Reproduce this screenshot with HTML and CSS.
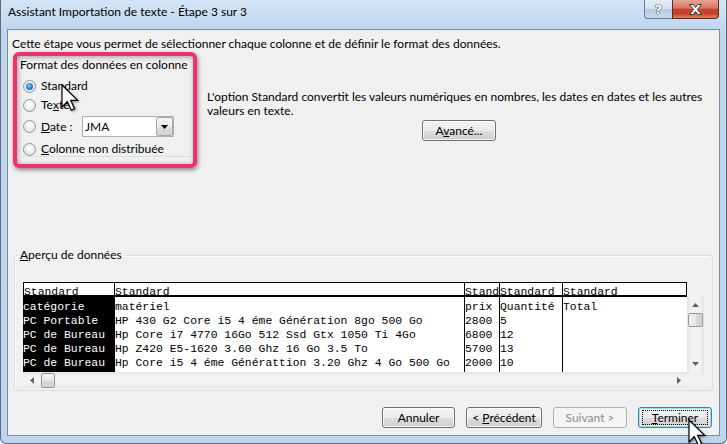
FILE: index.html
```html
<!DOCTYPE html>
<html lang="fr">
<head>
<meta charset="utf-8">
<title>Assistant Importation de texte</title>
<link rel="stylesheet" href="styles.css">
</head>
<body>
<div class="window">
  <div class="titlebar">
    <div class="title">Assistant Importation de texte - Étape 3 sur 3</div>
    <div class="caption">
      <div class="cap-btn help">?</div>
      <div class="cap-btn close">
        <svg width="13" height="11" viewBox="0 0 13 11"><path d="M0.5 0.5h3.6l2.4 3 2.4-3h3.6l-4.2 5 4.2 5h-3.6l-2.4-3-2.4 3h-3.6l4.2-5z" fill="#fff" stroke="#3d3d3d" stroke-width="1"/></svg>
      </div>
    </div>
  </div>
  <div class="client">
    <p class="intro">Cette étape vous permet de sélectionner chaque colonne et de définir le format des données.</p>
    <div class="top">
      <div class="highlight">
        <fieldset class="group format">
          <legend>Format des données en colonne</legend>
          <div class="opt r1"><span class="radio checked"></span><span>Standard</span></div>
          <div class="opt r2"><span class="radio"></span><span>Te<u>x</u>te</span></div>
          <div class="opt r3"><span class="radio"></span><span class="date-label"><u>D</u>ate :</span>
            <div class="combo"><span class="combo-text">JMA</span><span class="combo-btn"><svg width="7" height="4" viewBox="0 0 7 4"><path d="M0 0h7L3.5 4z" fill="#000"/></svg></span></div>
          </div>
          <div class="opt r4"><span class="radio"></span><span><u>C</u>olonne non distribuée</span></div>
        </fieldset>
      </div>
      <div class="explain">
        <p>L'option Standard convertit les valeurs numériques en nombres, les dates en dates et les autres<br>valeurs en texte.</p>
        <div class="center"><button class="btn adv"><span>A<u>v</u>ancé...</span></button></div>
      </div>
    </div>
    <fieldset class="group preview">
      <legend><u>A</u>perçu de données</legend>
      <div class="grid">
        <div class="cols">
          <div class="col c1">
            <div class="th first">Standard</div>
            <div class="body sel">
              <div class="td">catégorie</div>
              <div class="td">PC Portable</div>
              <div class="td">PC de Bureau</div>
              <div class="td">PC de Bureau</div>
              <div class="td">PC de Bureau</div>
            </div>
          </div>
          <div class="col c2">
            <div class="th">Standard</div>
            <div class="body">
              <div class="td">matériel</div>
              <div class="td">HP 430 G2 Core i5 4 éme Génération 8go 500 Go</div>
              <div class="td">Hp Core i7 4770 16Go 512 Ssd Gtx 1050 Ti 4Go</div>
              <div class="td">Hp Z420 E5-1620 3.60 Ghz 16 Go 3.5 To</div>
              <div class="td">Hp Core i5 4 éme Générattion 3.20 Ghz 4 Go 500 Go</div>
            </div>
          </div>
          <div class="col c3">
            <div class="th">Stand</div>
            <div class="body">
              <div class="td">prix</div>
              <div class="td">2800</div>
              <div class="td">6800</div>
              <div class="td">5700</div>
              <div class="td">2000</div>
            </div>
          </div>
          <div class="col c4">
            <div class="th">Standard</div>
            <div class="body">
              <div class="td">Quantité</div>
              <div class="td">5</div>
              <div class="td">12</div>
              <div class="td">13</div>
              <div class="td">10</div>
            </div>
          </div>
          <div class="col c5 last">
            <div class="th">Standard</div>
            <div class="body">
              <div class="td">Total</div>
            </div>
          </div>
        </div>
        <div class="vscroll">
          <span class="arrow"><svg width="7" height="4" viewBox="0 0 7 4"><path d="M3.5 0L7 4H0z" fill="#606060"/></svg></span>
          <span class="thumb v"></span>
          <span class="track"></span>
          <span class="arrow"><svg width="7" height="4" viewBox="0 0 7 4"><path d="M0 0h7L3.5 4z" fill="#606060"/></svg></span>
        </div>
        <div class="hscroll">
          <span class="arrow"><svg width="4" height="7" viewBox="0 0 4 7"><path d="M0 3.5L4 0v7z" fill="#606060"/></svg></span>
          <span class="thumb h"></span>
          <span class="track"></span>
          <span class="arrow"><svg width="4" height="7" viewBox="0 0 4 7"><path d="M4 3.5L0 0v7z" fill="#606060"/></svg></span>
        </div>
        <div class="corner"></div>
      </div>
    </fieldset>
    <div class="actions">
      <button class="btn w-annuler"><span>Annuler</span></button>
      <button class="btn w-prec"><span>&lt; <u>P</u>récédent</span></button>
      <button class="btn w-suiv disabled"><span>Suivant &gt;</span></button>
      <button class="btn w-term default"><span class="focus"><span><u>T</u>erminer</span></span></button>
    </div>
  </div>
  <svg class="cursor cur1" width="19" height="28" viewBox="0 0 19 28"><path d="M1 1L1 23L6.3 17.6L10.3 26.2L13.6 24.7L9.7 16.4L16.6 16.4Z" fill="#fff" stroke="#000" stroke-width="1.2" stroke-linejoin="miter"/></svg>
  <svg class="cursor cur2" width="19" height="28" viewBox="0 0 19 28"><path d="M1 1L1 23L6.3 17.6L10.3 26.2L13.6 24.7L9.7 16.4L16.6 16.4Z" fill="#fff" stroke="#000" stroke-width="1.2" stroke-linejoin="miter"/></svg>
</div>
</body>
</html>
```
FILE: styles.css
```css
* { box-sizing: border-box; }
html, body { margin: 0; padding: 0; width: 727px; height: 444px; overflow: hidden; }
body { font-family: Lato, "Liberation Sans", Arial, sans-serif; font-size: 12px; color: #000; }

.window {
  position: relative;
  width: 727px; height: 444px;
  display: flex; flex-direction: column;
  background: linear-gradient(to bottom, #d4e4f6 0px, #c1d7f0 28px, #bed5ef 100%);
  border: 1px solid #5b6b7d; border-top: 0;
  border-radius: 0 0 6px 6px;
}

.titlebar { height: 29px; display: flex; align-items: flex-start; flex: none; }
.title { padding: 4px 0 0 7px; line-height: 16px; white-space: nowrap; }
.caption { margin-left: auto; margin-right: 7px; display: flex; }
.cap-btn { height: 19px; display: flex; align-items: center; justify-content: center; }
.help {
  width: 28px;
  border: 1px solid #6a7c91; border-top: 0; border-right: 0;
  border-radius: 0 0 0 4px;
  background: linear-gradient(#e5edf6 0%, #d3e0ee 48%, #bccbdd 52%, #c9d8ea 100%);
  font-family: "DejaVu Sans", sans-serif; font-weight: bold; font-size: 13px; color: #fff;
  text-shadow: 0 0 1px #2e4560, 0 0 1px #2e4560, 0 0 1px #2e4560;
}
.close {
  width: 47px;
  border: 1px solid #5a2d28; border-top: 0;
  border-radius: 0 0 4px 0;
  background: linear-gradient(#e6a596 0%, #d87560 45%, #c6442d 52%, #c34129 75%, #e07e5f 100%);
}

.client {
  flex: 1;
  margin: 0 6px 7px 6px;
  border: 1px solid #7f8c9b;
  background: #f0f0f0;
  display: flex; flex-direction: column;
}
.intro { margin: 0; padding: 6px 0 0 4px; line-height: 16px; white-space: nowrap; }

.top { display: flex; padding-left: 5px; }
.highlight {
  width: 184px; height: 116px; flex: none;
  border: 4px solid #ef2f6e; border-radius: 6px;
  box-shadow: 1px 2px 4px rgba(0,0,0,.45), inset 1px 1px 5px rgba(0,0,0,.35);
}
.group { border: 1px solid #d5dfe5; margin: 0; min-width: 0; }
.group legend { padding: 0 2px; margin-left: -5px; line-height: 16px; white-space: nowrap; }
.format {
  margin-top: 1px; width: 176px; height: 100px;
  border-left: 0; border-radius: 0 3px 3px 0;
  padding: 5px 0 0 6px;
}
.opt { display: flex; align-items: center; gap: 5px; height: 16px; line-height: 16px; white-space: nowrap; }
.opt.r2, .opt.r3 { margin-top: 3px; }
.opt.r3 { height: 21px; }
.opt.r4 { margin-top: 5px; height: 14px; }
.radio {
  width: 13px; height: 13px; flex: none; border-radius: 50%;
  border: 1px solid #8a96a3;
  background: radial-gradient(circle at 50% 40%, #ffffff 0, #f0f0f0 45%, #d2d6da 100%);
  display: flex; align-items: center; justify-content: center;
}
.radio.checked::after {
  content: ""; width: 7px; height: 7px; border-radius: 50%;
  background: radial-gradient(circle at 45% 40%, #9ed2ff 0, #3f8ad6 40%, #15458f 100%);
}
.date-label { width: 36px; }
.combo {
  width: 92px; height: 21px; display: flex; align-items: center;
  background: #fff; border: 1px solid #abadb3;
}
.combo-text { padding-left: 2px; }
.combo-btn {
  margin-left: auto; width: 17px; height: 19px;
  border: 1px solid #a8a8a8; border-radius: 2px;
  background: linear-gradient(#f3f3f3 0%, #ebebeb 50%, #dddddd 51%, #d2d2d2 100%);
  display: flex; align-items: center; justify-content: center;
}

.explain { flex: 1; margin-left: 10px; padding: 38px 8px 0 0; }
.explain p { margin: 0; line-height: 14px; white-space: nowrap; }
.center { text-align: center; margin-top: 2px; }

.btn {
  height: 21px; padding: 0;
  font: inherit; color: #000;
  border: 1px solid #707070; border-radius: 3px;
  background: linear-gradient(#f2f2f2 0%, #ebebeb 50%, #dddddd 51%, #cfcfcf 100%);
  box-shadow: inset 0 0 0 1px rgba(255,255,255,.75);
  display: inline-flex; align-items: center; justify-content: center;
  white-space: nowrap;
}
.adv { width: 74px; }

.preview {
  margin: 79px 6px 0 6px;
  padding: 19px 8px 2px 8px;
  border-radius: 3px;
  box-shadow: inset 1px 1px 0 #fff;
}
.grid {
  display: grid;
  grid-template-columns: 664px 17px;
  grid-template-rows: 15px 75px 16px;
  font-family: "Liberation Mono", "Courier New", monospace; font-size: 11.4px;
}
.cols { grid-column: 1; grid-row: 1 / 3; display: flex; background: #fff; }
.col { display: flex; flex-direction: column; border-right: 1px solid #000; overflow: hidden; flex: none; }
.col.last { border-right: 0; }
.c1 { width: 92px; } .c2 { width: 350px; } .c3 { width: 35px; } .c4 { width: 63px; } .c5 { width: 124px; }
.th {
  height: 15px; flex: none; overflow: hidden; white-space: nowrap;
  border-top: 1px solid #000; border-bottom: 2px solid #000;
  line-height: 18px;
}
.th.first { border-left: 1px solid #000; }
.col.last .th { border-right: 1px solid #000; }
.body { flex: 1; padding-top: 3px; }
.body.sel { background: #000; color: #fff; }
.td { height: 14px; line-height: 14px; white-space: pre; overflow: hidden; }

.vscroll {
  grid-column: 2; grid-row: 2;
  display: flex; flex-direction: column; align-items: center;
  background: linear-gradient(to right, #e4e4e4 0, #f3f3f3 25%, #f3f3f3 75%, #e4e4e4 100%);
}
.vscroll .arrow { height: 16px; width: 17px; display: flex; align-items: center; justify-content: center; }
.vscroll .track { flex: 1; }
.thumb { border: 1px solid #979797; border-radius: 2px; }
.thumb.v { width: 15px; height: 14px; background: linear-gradient(to right, #f3f3f3 0, #e8e8e8 50%, #d9d9d9 51%, #d0d0d0 100%); }
.hscroll {
  grid-column: 1; grid-row: 3;
  display: flex; align-items: center;
  background: linear-gradient(#e4e4e4 0, #f3f3f3 25%, #f3f3f3 75%, #e4e4e4 100%);
}
.hscroll .arrow { width: 17px; height: 16px; display: flex; align-items: center; justify-content: center; }
.hscroll .track { flex: 1; }
.thumb.h { width: 14px; height: 15px; margin-left: 1px; background: linear-gradient(#f3f3f3 0, #e8e8e8 50%, #d9d9d9 51%, #d0d0d0 100%); }
.corner { grid-column: 2; grid-row: 3; background: #f0f0f0; }

.actions { margin-top: 16px; display: flex; justify-content: flex-end; gap: 11px; padding-right: 7px; }
.w-annuler { width: 73px; } .w-prec { width: 76px; } .w-suiv { width: 74px; } .w-term { width: 74px; }
.btn.disabled { border-color: #adb2b5; background: #f4f4f4; color: #8d8d8d; box-shadow: none; }
.btn.default { border-color: #3c7fb1; box-shadow: inset 0 0 0 1px #a6dcf7, inset 0 0 0 2px rgba(255,255,255,.5); }
.focus { border: 1px dotted #000; line-height: 13px; width: 66px; height: 15px; display: flex; align-items: center; justify-content: center; }

.cursor { position: absolute; filter: drop-shadow(1px 1px 1px rgba(0,0,0,.45)); }
.cur1 { left: 60px; top: 84px; }
.cur2 { left: 687px; top: 419px; }
```
